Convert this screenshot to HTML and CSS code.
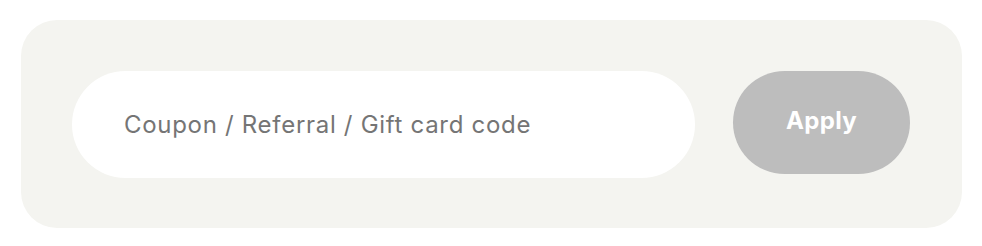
FILE: index.html
```html
<!DOCTYPE html>
<html>
<head>
<meta charset="utf-8">
<link rel="stylesheet" href="styles.css">
</head>
<body>
<div class="panel">
  <div class="field"><span class="placeholder">Coupon / Referral / Gift card code</span></div>
  <button class="apply">Apply</button>
</div>
</body>
</html>
```

FILE: styles.css
```css
html, body { margin: 0; padding: 0; background: #ffffff; }
body { font-family: Inter, "Noto Sans", sans-serif; }
.panel {
  margin: 20px 20px 0 21px;
  width: 941px;
  height: 208px;
  box-sizing: border-box;
  background: #f4f4f0;
  border-radius: 36px;
  padding: 51px 52px 50px 51px;
  display: flex;
  align-items: flex-start;
  gap: 38px;
}
.field {
  width: 623px;
  height: 107px;
  background: #ffffff;
  border-radius: 54px;
  display: flex;
  align-items: center;
  padding-left: 52px;
  box-sizing: border-box;
}
.placeholder {
  font-size: 24px;
  color: #757575;
  letter-spacing: 0.7px;
}
.apply {
  width: 177px;
  height: 103px;
  border: none;
  border-radius: 52px;
  background: #bdbdbd;
  color: #ffffff;
  font-family: Inter, sans-serif;
  font-weight: 700;
  font-size: 24px;
  letter-spacing: 0.3px;
  padding: 0 0 4px 0;
}
```
